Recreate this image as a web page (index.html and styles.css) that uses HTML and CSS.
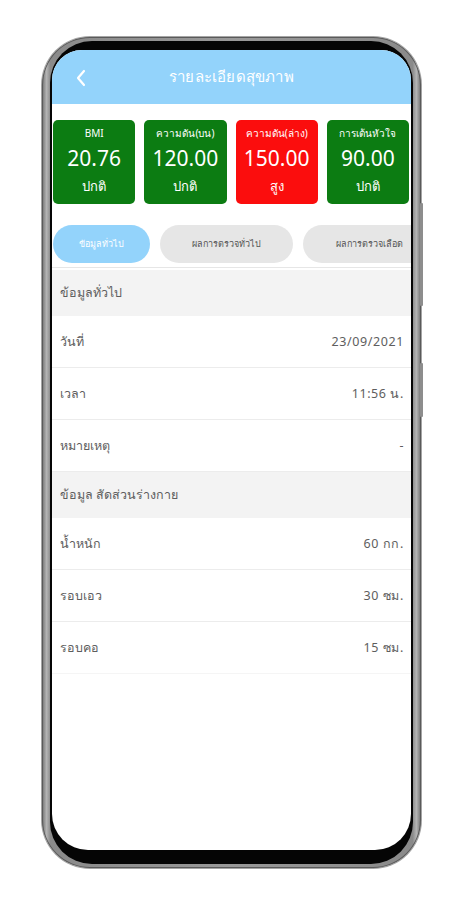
FILE: index.html
```html
<!DOCTYPE html>
<html lang="th">
<head>
<meta charset="utf-8">
<title>รายละเอียดสุขภาพ</title>
<link rel="stylesheet" href="styles.css">
</head>
<body>
<div class="stage">
  <div class="phone">
    <div class="bezel">
      <div class="screen">
        <header class="appbar">
          <svg class="back" width="12" height="18" viewBox="0 0 12 18"><path d="M9 2 L3 9 L9 16" fill="none" stroke="#fff" stroke-width="2.2" stroke-linecap="round" stroke-linejoin="round"/></svg>
          <h1 class="title">รายละเอียดสุขภาพ</h1>
        </header>
        <div class="cards">
          <div class="card ok"><span class="c-label">BMI</span><span class="c-value">20.76</span><span class="c-status">ปกติ</span></div>
          <div class="card ok"><span class="c-label">ความดัน(บน)</span><span class="c-value">120.00</span><span class="c-status">ปกติ</span></div>
          <div class="card high"><span class="c-label">ความดัน(ล่าง)</span><span class="c-value">150.00</span><span class="c-status">สูง</span></div>
          <div class="card ok"><span class="c-label">การเต้นหัวใจ</span><span class="c-value">90.00</span><span class="c-status">ปกติ</span></div>
        </div>
        <nav class="chips">
          <span class="chip active">ข้อมูลทั่วไป</span>
          <span class="chip">ผลการตรวจทั่วไป</span>
          <span class="chip">ผลการตรวจเลือด</span>
        </nav>
        <section class="list">
          <div class="sec-head">ข้อมูลทั่วไป</div>
          <div class="row"><span>วันที่</span><span class="val">23/09/2021</span></div>
          <div class="row"><span>เวลา</span><span class="val">11:56 น.</span></div>
          <div class="row"><span>หมายเหตุ</span><span class="val">-</span></div>
          <div class="sec-head">ข้อมูล สัดส่วนร่างกาย</div>
          <div class="row"><span>น้ำหนัก</span><span class="val">60 กก.</span></div>
          <div class="row"><span>รอบเอว</span><span class="val">30 ซม.</span></div>
          <div class="row last"><span>รอบคอ</span><span class="val">15 ซม.</span></div>
        </section>
      </div>
    </div>
    <span class="btn btn-a"></span>
    <span class="btn btn-b"></span>
  </div>
</div>
</body>
</html>
```
FILE: styles.css
```css
* { box-sizing: border-box; }
html, body { margin: 0; padding: 0; background: #fff; }
body { font-family: "Noto Sans", "Open Sans", sans-serif; }

.stage { width: 461px; height: 900px; padding: 37px 0 0 42px; }

.phone {
  position: relative;
  width: 379px;
  height: 831px;
  border-radius: 48px;
  padding: 4px 8px 4px 8px;
  background: linear-gradient(90deg, #6e6e6e 0%, #b4b4b4 1.2%, #8a8a8a 2.2%, #9a9a9a 50%, #8a8a8a 97.8%, #b4b4b4 98.8%, #6e6e6e 100%);
  box-shadow: 0 0 0 1px #a5a5a5, inset 0 0 0 1px #5a5a5a;
}

.bezel {
  height: 100%;
  background: #050505;
  border-radius: 42px;
  padding: 9px 2px 14px 2px;
}

.screen {
  height: 100%;
  background: #fff;
  border-radius: 30px 30px 36px 36px;
  overflow: hidden;
}

.btn { position: absolute; right: -2px; width: 3px; background: #8d8d8d; border-radius: 1px; }
.btn-a { top: 166px; height: 103px; }
.btn-b { top: 326px; height: 54px; }

.appbar {
  height: 54px;
  background: #93d3fb;
  display: flex;
  align-items: center;
  justify-content: center;
  position: relative;
}
.back { position: absolute; left: 23px; top: 19px; }
.title { margin: 0; font-size: 15px; font-weight: 400; color: #fff; letter-spacing: 0.2px; }

.cards {
  display: flex;
  gap: 9px;
  padding: 16px 2px 0 1px;
}
.card {
  flex: 1;
  height: 84px;
  border-radius: 5px;
  color: #fff;
  display: flex;
  flex-direction: column;
  align-items: center;
  padding-top: 6px;
}
.card.ok { background: #0c7c12; }
.card.high { background: #fb0d0d; }
.c-label { font-size: 10px; line-height: 14px; }
.c-value { font-size: 21px; line-height: 30px; margin-top: 3px; }
.c-status { font-size: 13px; line-height: 18px; margin-top: 4px; }

.chips {
  display: flex;
  gap: 10px;
  padding: 21px 0 0 1px;
  overflow: hidden;
  white-space: nowrap;
  height: 64px;
  border-bottom: 1px solid #e6e6e6;
}
.chip {
  flex: none;
  height: 38px;
  border-radius: 19px;
  background: #e6e6e6;
  color: #555;
  font-size: 9px;
  display: flex;
  align-items: center;
  justify-content: center;
  width: 133px;
}
.chip.active { background: #93d3fb; color: #fff; width: 97px; }

.list { padding-top: 2px; }
.sec-head {
  height: 46px;
  background: #f3f3f3;
  display: flex;
  align-items: center;
  padding-left: 8px;
  font-size: 12.5px;
  color: #5e5e5e;
}
.row {
  height: 52px;
  display: flex;
  align-items: center;
  justify-content: space-between;
  padding: 0 7px 0 8px;
  font-size: 12.5px;
  color: #5e5e5e;
  border-bottom: 1px solid #ececec;
}
.val { letter-spacing: 0.6px; }
.row.last { border-bottom: 1px solid #f5f5f5; }
```
